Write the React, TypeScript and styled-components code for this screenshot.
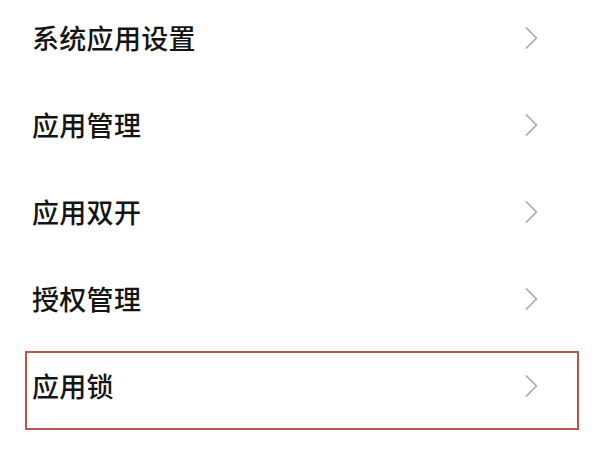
import React from "react";
import styled, { createGlobalStyle } from "styled-components";

const Global = createGlobalStyle`
  html, body { margin: 0; padding: 0; background: #ffffff; }
  body { width: 600px; height: 450px; overflow: hidden; }
`;

const List = styled.div`
  display: flex;
  flex-direction: column;
  margin-top: -6px;
  font-family: "Noto Sans CJK SC", "Noto Sans", sans-serif;
`;

const Row = styled.div`
  position: relative;
  height: 87px;
  display: flex;
  align-items: center;
  justify-content: space-between;
  padding: 0 62px 0 32px;
`;

const Label = styled.span`
  font-size: 27px;
  font-weight: 500;
  color: #141414;
  letter-spacing: 0.3px;
`;

const Highlight = styled.div`
  position: absolute;
  left: 25px;
  right: 21px;
  top: 9px;
  height: 79px;
  border: 2px solid #b9574f;
  box-sizing: border-box;
  pointer-events: none;
`;

const Chevron = () => (
  <svg width="13" height="22" viewBox="0 0 13 22" fill="none">
    <polyline
      points="1.5,1 11.5,11 1.5,21"
      stroke="#a9a9a9"
      strokeWidth="1.7"
      strokeLinecap="round"
      strokeLinejoin="round"
    />
  </svg>
);

const items = ["系统应用设置", "应用管理", "应用双开", "授权管理", "应用锁"];

export default function App() {
  return (
    <>
      <Global />
      <List>
        {items.map((t, i) => (
          <Row key={t}>
            <Label>{t}</Label>
            <Chevron />
            {i === items.length - 1 && <Highlight />}
          </Row>
        ))}
      </List>
    </>
  );
}
